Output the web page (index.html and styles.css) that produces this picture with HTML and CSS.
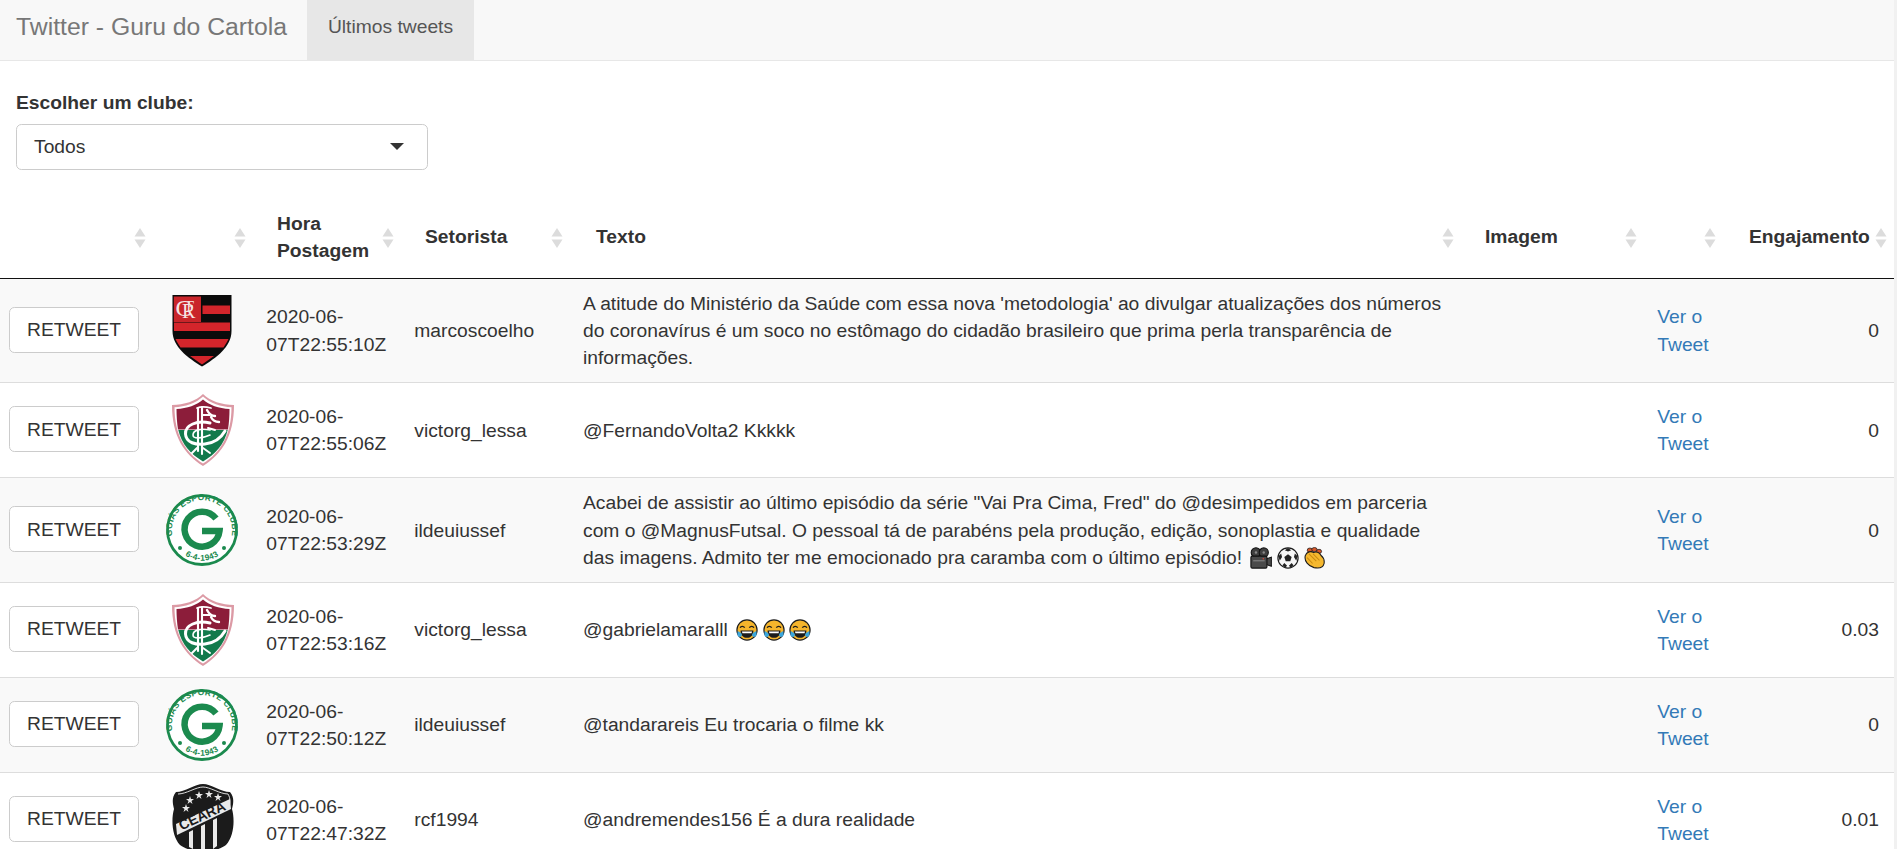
FILE: index.html
```html
<!DOCTYPE html>
<html lang="pt">
<head>
<meta charset="utf-8">
<title>Twitter - Guru do Cartola</title>
<link rel="stylesheet" href="styles.css">
</head>
<body>
<svg class="defs" width="0" height="0" aria-hidden="true">
  <defs>
    <symbol id="sort" viewBox="0 0 12 20">
      <path d="M6 0 11.500 8.600H.5Z M.5 11.400H11.500L6 20Z" fill="#dcdcdc"/>
    </symbol>
    <symbol id="flamengo" viewBox="0 0 60 72">
      <path d="M0.500 0H59.500V36C59.500 52 44 63 30 71.500 16 63 .5 52 .5 36Z" fill="#0b0b0b"/>
      <path d="M1.800 1.500H29V27H1.800Z" fill="#c9252a"/>
      <path d="M30.500 10.500H58V19H30.500Z M2 27.500H58V36H2Z M3.500 44H56.500C55 47 53.500 49.500 51.500 52.500H8.500C6.500 49.500 5 47 3.500 44Z M18 61H42C38 64 34 66.500 30 69.500 26 66.500 22 64 18 61Z" fill="#d4252b"/>
      <text x="3.500" y="21" class="crf crf-c">C</text>
      <text x="10" y="23" class="crf">R</text>
      <text x="14.500" y="15.500" class="crf crf-f">F</text>
    </symbol>
    <symbol id="fluminense" viewBox="0 0 62 72">
      <path d="M31 0C38 7 50 11 62 11 62 42 50 60 31 72 12 60 0 42 0 11 12 11 24 7 31 0Z" fill="#dc9aa5"/>
      <path d="M31 2.500C38 9 49 13 59.500 13.200 59.500 41 48.500 58.500 31 69.500 13.500 58.500 2.500 41 2.500 13.200 13 13 24 9 31 2.500Z" fill="#fff"/>
      <path d="M4.500 15C15 14.500 25 11 31 5.500 37 11 47 14.500 57.500 15 57.500 22 57 29 56 35.500H6C5 29 4.500 22 4.500 15Z" fill="#8c1d3a"/>
      <path d="M6.300 36H55.700C52.500 50 43.500 60 31 67.500 18.500 60 9.500 50 6.300 36Z" fill="#137a4c"/>
      <g fill="none" stroke="#fff" stroke-linecap="round">
        <path d="M26 14V57M30 13V60" stroke-width="2.100"/>
        <path d="M25 14C30 12 35 13 39 14M30 21H38" stroke-width="1.800"/>
        <path d="M35 16C37 20 40 22 43 22M39 23C41 27 44 28 47 28" stroke-width="2.400"/>
        <path d="M38 29C25 26 13 31 13.500 40 14 49 24 51 33 50 42 49 49 44 53 37" stroke-width="3"/>
        <path d="M38 36C29 34 21 36 21 41 21 45 29 45 38 41" stroke-width="1.600"/>
        <path d="M36 34 43 36M31 54 38 59M25 54 20 59" stroke-width="2"/>
      </g>
    </symbol>
    <symbol id="goias" viewBox="0 0 72 72">
      <circle cx="36" cy="36" r="34.500" fill="#fff" stroke="#1b8a4e" stroke-width="2.800"/>
      <path id="ring-top" d="M8 47A30 30 0 1 1 64 47" fill="none"/>
      <path id="ring-bottom" d="M17 60A30.500 30.500 0 0 0 55 60" fill="none"/>
      <text class="ring"><textPath href="#ring-top" startOffset="50%" text-anchor="middle">GOIÁS ESPORTE CLUBE</textPath></text>
      <text class="ring"><textPath href="#ring-bottom" startOffset="50%" text-anchor="middle">6-4-1943</textPath></text>
      <circle cx="14" cy="54" r="2" fill="#1b8a4e"/>
      <circle cx="58" cy="54" r="2" fill="#1b8a4e"/>
      <path d="M50 24.500A17.500 17.500 0 1 0 53.500 37H36" fill="none" stroke="#1b8a4e" stroke-width="6.500"/>
    </symbol>
    <symbol id="ceara" viewBox="0 0 64 72">
      <path d="M5 8C14 8 24 0 32 0 40 0 50 8 59 8 64 14 62 20 61 25 64 36 63 52 55 61 47 67 38 66 32 72 26 66 17 67 9 61 1 52 0 36 3 25 2 20 0 14 5 8Z" fill="#1b1b1b"/>
      <path d="M7 10C15 10 25 3 32 3 39 3 49 10 57 10 60 15 59 20 58 22" fill="none" stroke="#ddd" stroke-width="1"/>
      <g fill="#e9e9e9">
        <path d="M19 12 20 15H23L20.500 17 21.500 20 19 18 16.500 20 17.500 17 15 15H18Z"/>
        <path d="M28 7 29 10H32L29.500 12 30.500 15 28 13 25.500 15 26.500 12 24 10H27Z"/>
        <path d="M38 6 39 9H42L39.500 11 40.500 14 38 12 35.500 14 36.500 11 34 9H37Z"/>
        <path d="M47 9 48 12H51L48.500 14 49.500 17 47 15 44.500 17 45.500 14 43 12H46Z"/>
        <path d="M15 20 16 23H19L16.500 25 17.500 28 15 26 12.500 28 13.500 25 11 23H14Z"/>
      </g>
      <path d="M5 40 59 15 60 25 6 51Z" fill="#e9e9e9"/>
      <text class="ceara-name" transform="translate(10.500 46.500) rotate(-25)">CEARÁ</text>
      <path d="M18 48 22 46V65L18 63Z M30 42 34 40V70L32 71 30 69Z M42 36 46 34V62L42 65Z" fill="#e9e9e9"/>
    </symbol>
    <symbol id="joy" viewBox="0 0 24 24">
      <circle cx="12" cy="12" r="11" fill="#f5b52c" stroke="#1c1c1c" stroke-width="1.300"/>
      <path d="M4.500 9.500C5.500 7.500 8 7.500 9.500 9.500M14.500 9.500C16 7.500 18.500 7.500 19.500 9.500" fill="none" stroke="#1c1c1c" stroke-width="1.500"/>
      <path d="M5 12.500H19C19 18 16 20.500 12 20.500 8 20.500 5 18 5 12.500Z" fill="#1c1c1c"/>
      <path d="M6.500 13.500H17.500L17 15.500H7Z" fill="#fff"/>
      <path d="M2 13C1 16.500 1.500 19.500 4.500 19.500 6.500 19.500 7 17.500 5.800 15.500Z M22 13C23 16.500 22.500 19.500 19.500 19.500 17.500 19.500 17 17.500 18.200 15.500Z" fill="#3aa6dd"/>
    </symbol>
    <symbol id="camera" viewBox="0 0 24 24">
      <circle cx="6.500" cy="6" r="5.200" fill="#3f3f3f" stroke="#111" stroke-width="1.200"/>
      <circle cx="15" cy="6" r="5" fill="#3f3f3f" stroke="#111" stroke-width="1.200"/>
      <circle cx="6.500" cy="6" r="1.300" fill="#8a8a8a"/>
      <circle cx="15" cy="6" r="1.300" fill="#8a8a8a"/>
      <path d="M17.500 13 23.300 11V21L17.500 19Z" fill="#4a4a4a" stroke="#111" stroke-width="1.100"/>
      <rect x="1" y="10" width="17.500" height="13" rx="1.500" fill="#4a4a4a" stroke="#111" stroke-width="1.200"/>
      <path d="M3.500 15H16" stroke="#7d7d7d" stroke-width="1.400"/>
      <circle cx="14.500" cy="12.800" r=".9" fill="#d9453a"/>
    </symbol>
    <symbol id="ball" viewBox="0 0 24 24">
      <circle cx="12" cy="12" r="11" fill="#f6f6f6" stroke="#1c1c1c" stroke-width="1.300"/>
      <path d="M12 8 16 11 14.500 15.500H9.500L8 11Z" fill="#222"/>
      <path d="M12 1 15.500 3.500 12 5 8.500 3.500Z M1.500 10 4.500 7 5.500 11 3 15Z M22.500 10 19.500 7 18.500 11 21 15Z M6 20 8 17.500 11 20.500 9 22.500Z M18 20 16 17.500 13 20.500 15 22.500Z" fill="#222"/>
    </symbol>
    <symbol id="clap" viewBox="0 0 24 24">
      <g fill="#d4562a" stroke="#1c1c1c" stroke-width=".8">
        <ellipse cx="7.500" cy="3.500" rx="2.900" ry="2.400"/>
        <ellipse cx="12.500" cy="2.800" rx="2.900" ry="2.300"/>
        <ellipse cx="17.500" cy="4.800" rx="2.800" ry="2.300"/>
      </g>
      <path d="M2.500 9.500C4 4.500 9 4.500 11.500 6 14.500 4.500 18 6 19.500 9 22 11 23.500 15 23 18 22 22.500 17 23.500 12 22.500 6 21 1 15.500 2.500 9.500Z" fill="#f5b82e" stroke="#1c1c1c" stroke-width="1.200"/>
      <path d="M6.500 7.500 14.500 15.500M11 7.500 18 14.500M4.500 11.500 10.500 18" stroke="#c98a12" stroke-width="1.100" fill="none"/>
    </symbol>
  </defs>
</svg>

<nav class="navbar">
  <a class="brand">Twitter - Guru do Cartola</a>
  <a class="tab">Últimos tweets</a>
</nav>

<main class="content">
  <label class="field-label">Escolher um clube:</label>
  <div class="select"><span>Todos</span><i class="caret"></i></div>

  <table class="tweets">
    <colgroup>
      <col class="c-action"><col class="c-logo"><col class="c-date"><col class="c-user"><col class="c-text"><col class="c-image"><col class="c-link"><col class="c-eng">
    </colgroup>
    <thead>
      <tr>
        <th><svg class="sort"><use href="#sort"/></svg></th>
        <th><svg class="sort"><use href="#sort"/></svg></th>
        <th>Hora Postagem<svg class="sort"><use href="#sort"/></svg></th>
        <th>Setorista<svg class="sort sort-user"><use href="#sort"/></svg></th>
        <th>Texto<svg class="sort"><use href="#sort"/></svg></th>
        <th>Imagem<svg class="sort"><use href="#sort"/></svg></th>
        <th><svg class="sort"><use href="#sort"/></svg></th>
        <th class="th-eng">Engajamento<svg class="sort sort-eng"><use href="#sort"/></svg></th>
      </tr>
    </thead>
    <tbody>
      <tr>
        <td><button class="btn">RETWEET</button></td>
        <td><svg class="logo logo-fla"><use href="#flamengo"/></svg></td>
        <td>2020-06-07T22:55:10Z</td>
        <td>marcoscoelho</td>
        <td class="text">A atitude do Ministério da Saúde com essa nova 'metodologia' ao divulgar atualizações dos números do coronavírus é um soco no estômago do cidadão brasileiro que prima perla transparência de informações.</td>
        <td></td>
        <td><a class="link">Ver o Tweet</a></td>
        <td class="num">0</td>
      </tr>
      <tr>
        <td><button class="btn">RETWEET</button></td>
        <td><svg class="logo logo-flu"><use href="#fluminense"/></svg></td>
        <td>2020-06-07T22:55:06Z</td>
        <td>victorg_lessa</td>
        <td class="text">@FernandoVolta2 Kkkkk</td>
        <td></td>
        <td><a class="link">Ver o Tweet</a></td>
        <td class="num">0</td>
      </tr>
      <tr>
        <td><button class="btn">RETWEET</button></td>
        <td><svg class="logo logo-goi"><use href="#goias"/></svg></td>
        <td>2020-06-07T22:53:29Z</td>
        <td>ildeuiussef</td>
        <td class="text">Acabei de assistir ao último episódio da série "Vai Pra Cima, Fred" do @desimpedidos em parceria com o @MagnusFutsal. O pessoal tá de parabéns pela produção, edição, sonoplastia e qualidade das imagens. Admito ter me emocionado pra caramba com o último episódio! <svg class="emoji"><use href="#camera"/></svg><svg class="emoji"><use href="#ball"/></svg><svg class="emoji"><use href="#clap"/></svg></td>
        <td></td>
        <td><a class="link">Ver o Tweet</a></td>
        <td class="num">0</td>
      </tr>
      <tr>
        <td><button class="btn">RETWEET</button></td>
        <td><svg class="logo logo-flu"><use href="#fluminense"/></svg></td>
        <td>2020-06-07T22:53:16Z</td>
        <td>victorg_lessa</td>
        <td class="text">@gabrielamaralll <svg class="emoji"><use href="#joy"/></svg><svg class="emoji"><use href="#joy"/></svg><svg class="emoji"><use href="#joy"/></svg></td>
        <td></td>
        <td><a class="link">Ver o Tweet</a></td>
        <td class="num">0.03</td>
      </tr>
      <tr>
        <td><button class="btn">RETWEET</button></td>
        <td><svg class="logo logo-goi"><use href="#goias"/></svg></td>
        <td>2020-06-07T22:50:12Z</td>
        <td>ildeuiussef</td>
        <td class="text">@tandarareis Eu trocaria o filme kk</td>
        <td></td>
        <td><a class="link">Ver o Tweet</a></td>
        <td class="num">0</td>
      </tr>
      <tr>
        <td><button class="btn">RETWEET</button></td>
        <td><svg class="logo logo-cea"><use href="#ceara"/></svg></td>
        <td>2020-06-07T22:47:32Z</td>
        <td>rcf1994</td>
        <td class="text">@andremendes156 É a dura realidade</td>
        <td></td>
        <td><a class="link">Ver o Tweet</a></td>
        <td class="num">0.01</td>
      </tr>
    </tbody>
  </table>
</main>
<div class="scrollbar"></div>
</body>
</html>
```
FILE: styles.css
```css
* { box-sizing: border-box; }
html, body { height: 100%; overflow: hidden; }
body {
  margin: 0;
  padding-right: 3px;
  background: #fff;
  color: #333;
  font-family: "Liberation Sans", Arial, sans-serif;
  font-size: 19.25px;
  line-height: 27.2px;
}
.defs { position: absolute; }
.navbar {
  display: flex;
  height: 61px;
  background: #f8f8f8;
  border-bottom: 1px solid #e7e7e7;
}
.brand {
  padding: 0 20px 0 16px;
  color: #777;
  font-size: 24.75px;
  line-height: 54px;
}
.tab {
  width: 167px;
  height: 60px;
  background: #e7e7e7;
  color: #555;
  line-height: 54px;
  text-align: center;
}
.field-label {
  display: block;
  margin: 28px 0 8px 16px;
  font-weight: 700;
}
.select {
  position: relative;
  display: flex;
  align-items: center;
  width: 412px;
  height: 46px;
  margin-left: 16px;
  padding: 0 0 2px 17px;
  background: #fff;
  border: 1px solid #ccc;
  border-radius: 5.4px;
}
.caret {
  position: absolute;
  right: 23px;
  top: 18px;
  border-left: 7px solid transparent;
  border-right: 7px solid transparent;
  border-top: 7px solid #333;
}
.tweets {
  width: 100%;
  margin-top: 26px;
  table-layout: fixed;
  border-collapse: collapse;
}
.c-action { width: 157px; }
.c-logo { width: 100px; }
.c-date { width: 148px; }
.c-user { width: 171px; }
.c-text { width: 889px; }
.c-image { width: 183px; }
.c-link { width: 79px; }
.c-eng { width: 167px; }
th {
  position: relative;
  padding: 13.6px 28px 13.6px 20px;
  border-bottom: 1px solid #111;
  font-weight: 700;
  text-align: left;
}
.th-eng { padding-left: 22px; padding-right: 0; white-space: nowrap; }
.sort {
  position: absolute;
  right: 11px;
  top: 50%;
  width: 12px;
  height: 20px;
  margin-top: -9px;
}
.sort-user { right: 13px; }
.sort-eng { right: 7px; }
td {
  padding: 11px 9.3px;
  border-bottom: 1px solid #ddd;
  vertical-align: middle;
}
td.text { padding-left: 7px; padding-right: 12px; }
tbody tr:nth-child(odd) td { background: #f9f9f9; }
.btn {
  display: block;
  width: 129.5px;
  height: 46px;
  margin-bottom: 2px;
  padding: 0;
  background: #fff;
  border: 1px solid #ccc;
  border-radius: 5.4px;
  color: #333;
  font: inherit;
}
.logo { display: block; height: 72px; }
.logo-fla { width: 60px; margin-left: 6px; }
.logo-flu { width: 62px; margin-left: 5.5px; }
.logo-goi { width: 72px; }
.logo-cea { width: 64px; margin-left: 4.5px; }
.link { color: #337ab7; }
.num { padding-right: 15px; text-align: right; }
.emoji {
  width: 22px;
  height: 22px;
  margin: 0 1.5px 0 3px;
  vertical-align: -5px;
}
.scrollbar {
  position: fixed;
  top: 0;
  right: 0;
  bottom: 0;
  width: 3px;
  background: #f1f1f1;
}
.crf {
  fill: #f5e4e4;
  font-family: "Liberation Serif", serif;
  font-size: 20px;
}
.crf-c { font-size: 24px; }
.crf-f { font-size: 14px; }
.ring {
  fill: #1b8a4e;
  font-family: "Liberation Sans", sans-serif;
  font-size: 8.3px;
  font-weight: 700;
  letter-spacing: .3px;
}
.ceara-name {
  fill: #1b1b1b;
  font-family: "Liberation Sans", sans-serif;
  font-size: 14px;
  font-weight: 700;
}
```
